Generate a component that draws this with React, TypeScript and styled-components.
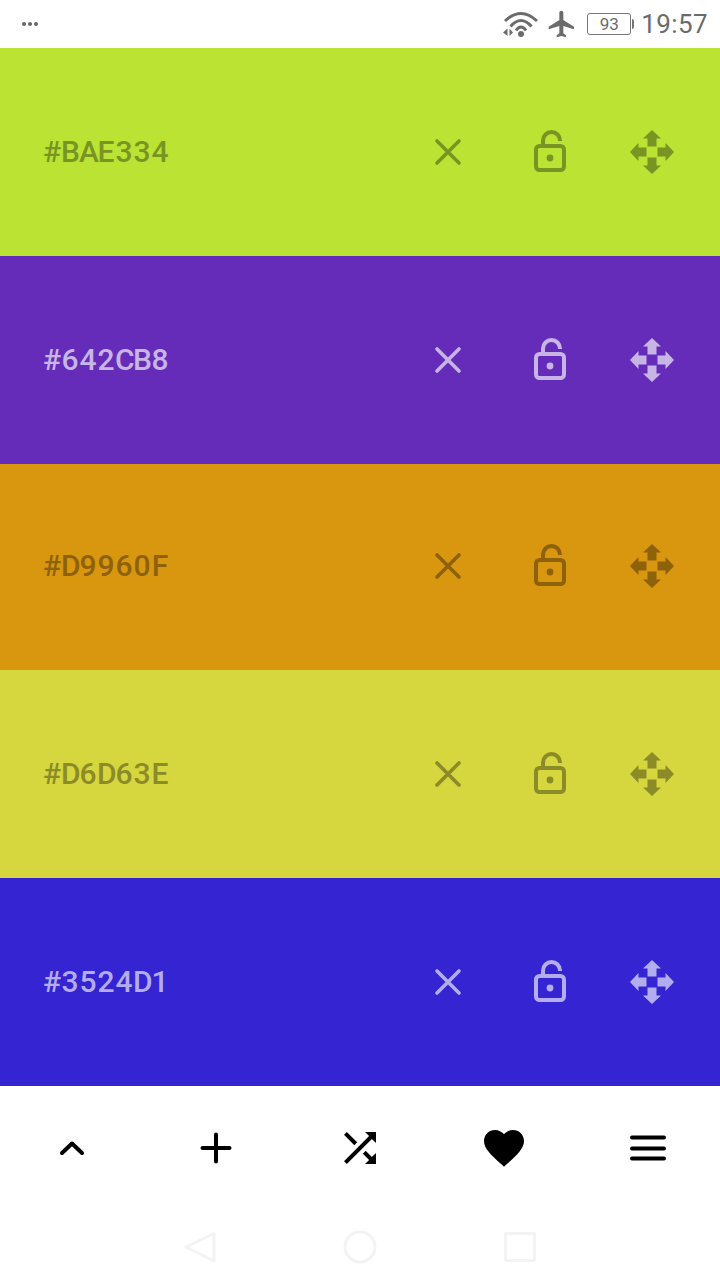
import React from 'react';
import styled, { createGlobalStyle } from 'styled-components';

const colors = [
    { hex: '#BAE334', bg: '#bae334', fg: '#799422', height: 208, nudge: 0 },
    { hex: '#642CB8', bg: '#642cb8', fg: '#c7b5e6', height: 208, nudge: 0 },
    { hex: '#D9960F', bg: '#d9960f', fg: '#8d620a', height: 206, nudge: 2 },
    { hex: '#D6D63E', bg: '#d6d63e', fg: '#8b8b28', height: 208, nudge: 0 },
    { hex: '#3524D1', bg: '#3524d1', fg: '#b3acee', height: 208, nudge: 0 },
];

const CloseIcon = () => (
    <svg width="48" height="48" viewBox="0 0 48 48" fill="none" stroke="currentColor" strokeWidth="3.6" strokeLinecap="round">
        <path d="M13 13L35 35M35 13L13 35" />
    </svg>
);

const LockIcon = () => (
    <svg width="48" height="48" viewBox="0 0 48 48" fill="none" stroke="currentColor" strokeWidth="4">
        <rect x="10" y="18" width="28" height="24" rx="3.5" />
        <path d="M17 17V12.5a8.500 8.500 0 0 1 17 0v0.500" />
        <circle cx="24" cy="30" r="3.4" fill="currentColor" stroke="none" />
    </svg>
);

const arrow = 'M24 2L33 10.5H28.500V18.500H19.500V10.5H15Z';

const MoveIcon = () => (
    <svg width="48" height="48" viewBox="0 0 48 48" fill="currentColor">
        <path d={arrow} />
        <path d={arrow} transform="rotate(90 24 24)" />
        <path d={arrow} transform="rotate(180 24 24)" />
        <path d={arrow} transform="rotate(270 24 24)" />
    </svg>
);

const ChevronIcon = () => (
    <svg width="48" height="48" viewBox="0 0 48 48" fill="none" stroke="#000" strokeWidth="4" strokeLinecap="round" strokeLinejoin="round">
        <path d="M14 29L24 19.5L34 29" />
    </svg>
);

const PlusIcon = () => (
    <svg width="48" height="48" viewBox="0 0 48 48" fill="none" stroke="#000" strokeWidth="4" strokeLinecap="round">
        <path d="M24 10.5V37.5M10.5 24H37.5" />
    </svg>
);

const ShuffleIcon = () => (
    <svg width="48" height="48" viewBox="0 0 24 24" fill="#000">
        <path d="M10.59 9.17L5.41 4 4 5.41l5.17 5.17 1.42-1.41zM14.5 4l2.04 2.04L4 18.59 5.41 20 17.96 7.46 20 9.5V4h-5.5zm.33 9.41l-1.41 1.41 3.13 3.13L14.5 20H20v-5.5l-2.04 2.04-3.13-3.13z" />
    </svg>
);

const HeartIcon = () => (
    <svg width="48" height="48" viewBox="0 0 24 24" fill="#000">
        <path d="M12 21.35l-1.45-1.32C5.4 15.36 2 12.28 2 8.5 2 5.42 4.42 3 7.5 3c1.74 0 3.41.81 4.5 2.09C13.09 3.81 14.76 3 16.5 3 19.58 3 22 5.42 22 8.5c0 3.78-3.4 6.86-8.55 11.54L12 21.35z" />
    </svg>
);

const MenuIcon = () => (
    <svg width="48" height="48" viewBox="0 0 48 48" fill="none" stroke="#000" strokeWidth="4" strokeLinecap="round">
        <path d="M8 13.5H40M8 24.5H40M8 34.5H40" />
    </svg>
);

const DotsIcon = () => (
    <svg width="18" height="6" viewBox="0 0 18 6" fill="#666">
        <circle cx="3" cy="3" r="2" />
        <circle cx="9" cy="3" r="2" />
        <circle cx="15" cy="3" r="2" />
    </svg>
);

const WifiIcon = () => (
    <svg width="36" height="28" viewBox="0 0 36 28" fill="none" stroke="#6b6b6b" strokeWidth="3">
        <path d="M3 11Q19 -4 35 11" />
        <path d="M8.500 16.500Q19 4.500 29.500 16.500" />
        <path d="M14 20.500Q19 13.500 24 20.500" />
        <circle cx="19" cy="24" r="3" fill="#6b6b6b" stroke="none" />
        <path d="M5.500 18.500V26L1 22.500ZM7.500 18.500V26L11 22.500Z" fill="#6b6b6b" stroke="none" />
    </svg>
);

const PlaneIcon = () => (
    <svg width="32" height="32" viewBox="0 0 24 24" fill="#6b6b6b">
        <path d="M21 16v-2l-8-5V3.500c0-.83-.67-1.500-1.500-1.500S10 2.670 10 3.500V9l-8 5v2l8-2.500V19l-2 1.500V22l3.500-1 3.500 1v-1.500L13 19v-5.500l8 2.500z" />
    </svg>
);

const App = (): JSX.Element => {
    return (
        <Screen>
            <GlobalStyle />
            <StatusBar>
                <DotsIcon />
                <StatusRight>
                    <WifiIcon />
                    <PlaneSlot><PlaneIcon /></PlaneSlot>
                    <Battery>93</Battery>
                    <Clock>19:57</Clock>
                </StatusRight>
            </StatusBar>

            {colors.map((color) => (
                <ColorRow key={color.hex} $bg={color.bg} $fg={color.fg} $height={color.height} $nudge={color.nudge}>
                    <HexLabel>
                        {color.hex.split('').map((char, index) => (
                            <HexChar key={index}>{char}</HexChar>
                        ))}
                    </HexLabel>
                    <Actions>
                        <ActionSlot><CloseIcon /></ActionSlot>
                        <ActionSlot><LockIcon /></ActionSlot>
                        <ActionSlot><MoveIcon /></ActionSlot>
                    </Actions>
                </ColorRow>
            ))}

            <Toolbar>
                <ToolButton><ChevronIcon /></ToolButton>
                <ToolButton><PlusIcon /></ToolButton>
                <ToolButton><ShuffleIcon /></ToolButton>
                <ToolButton><HeartIcon /></ToolButton>
                <ToolButton><MenuIcon /></ToolButton>
            </Toolbar>

            <NavBar>
                <svg width="48" height="48" viewBox="0 0 48 48" fill="none" stroke="#f3f3f3" strokeWidth="3" strokeLinejoin="round">
                    <path d="M38 12.500V40L10 26Z" />
                </svg>
                <svg width="48" height="48" viewBox="0 0 48 48" fill="none" stroke="#f3f3f3" strokeWidth="3">
                    <circle cx="24" cy="26" r="15" />
                </svg>
                <svg width="48" height="48" viewBox="0 0 48 48" fill="none" stroke="#f3f3f3" strokeWidth="3">
                    <rect x="9.500" y="12.500" width="29" height="27" rx="1" />
                </svg>
            </NavBar>
        </Screen>
    );
};

const GlobalStyle = createGlobalStyle`
    body {
        margin: 0;
        background: white;
        font-family: Roboto, "Liberation Sans", sans-serif;
    }
`;

const Screen = styled.div`
    width: 720px;
    height: 1280px;
    overflow: hidden;
    display: flex;
    flex-direction: column;
    background: white;
`;

const StatusBar = styled.div`
    height: 48px;
    display: flex;
    align-items: center;
    justify-content: space-between;
    padding: 0 12px 0 21px;
    color: #6b6b6b;
`;

const StatusRight = styled.div`
    display: flex;
    align-items: center;
`;

const PlaneSlot = styled.div`
    display: flex;
    margin-left: 8px;
`;

const Battery = styled.div`
    position: relative;
    width: 42px;
    height: 20px;
    margin: 0 10px 0 9px;
    border: 1.5px solid #777;
    border-radius: 3px;
    font-size: 17px;
    line-height: 20px;
    text-align: center;
    color: #6b6b6b;

    &::after {
        content: '';
        position: absolute;
        right: -4px;
        top: 5px;
        width: 2px;
        height: 10px;
        border-radius: 0 2px 2px 0;
        background: #777;
    }
`;

const Clock = styled.span`
    font-size: 26px;
    letter-spacing: 0.4px;
`;

const ColorRow = styled.div<{ $bg: string; $fg: string; $height: number; $nudge: number }>`
    height: ${(props) => props.$height}px;
    flex: none;
    box-sizing: border-box;
    display: flex;
    align-items: center;
    justify-content: space-between;
    padding: 0 17px ${(props) => props.$nudge}px 43px;
    background: ${(props) => props.$bg};
    color: ${(props) => props.$fg};
`;

const HexLabel = styled.span`
    display: flex;
    margin-bottom: 2px;
    font-size: 30px;
    font-weight: 500;
`;

/* the label is monospaced in the app, and Roboto Mono isn't available */
const HexChar = styled.span`
    display: block;
    width: 18px;
    text-align: center;
`;

const Actions = styled.div`
    display: flex;
`;

const ActionSlot = styled.div`
    width: 102px;
    height: 48px;
    display: flex;
    align-items: center;
    justify-content: center;
`;

const Toolbar = styled.div`
    height: 124px;
    flex: none;
    display: grid;
    grid-template-columns: repeat(5, 1fr);
    align-items: center;
`;

const ToolButton = styled.div`
    display: flex;
    justify-content: center;
`;

const NavBar = styled.div`
    height: 70px;
    flex: none;
    display: flex;
    align-items: center;
    justify-content: center;
    gap: 112px;
`;

export default App;
